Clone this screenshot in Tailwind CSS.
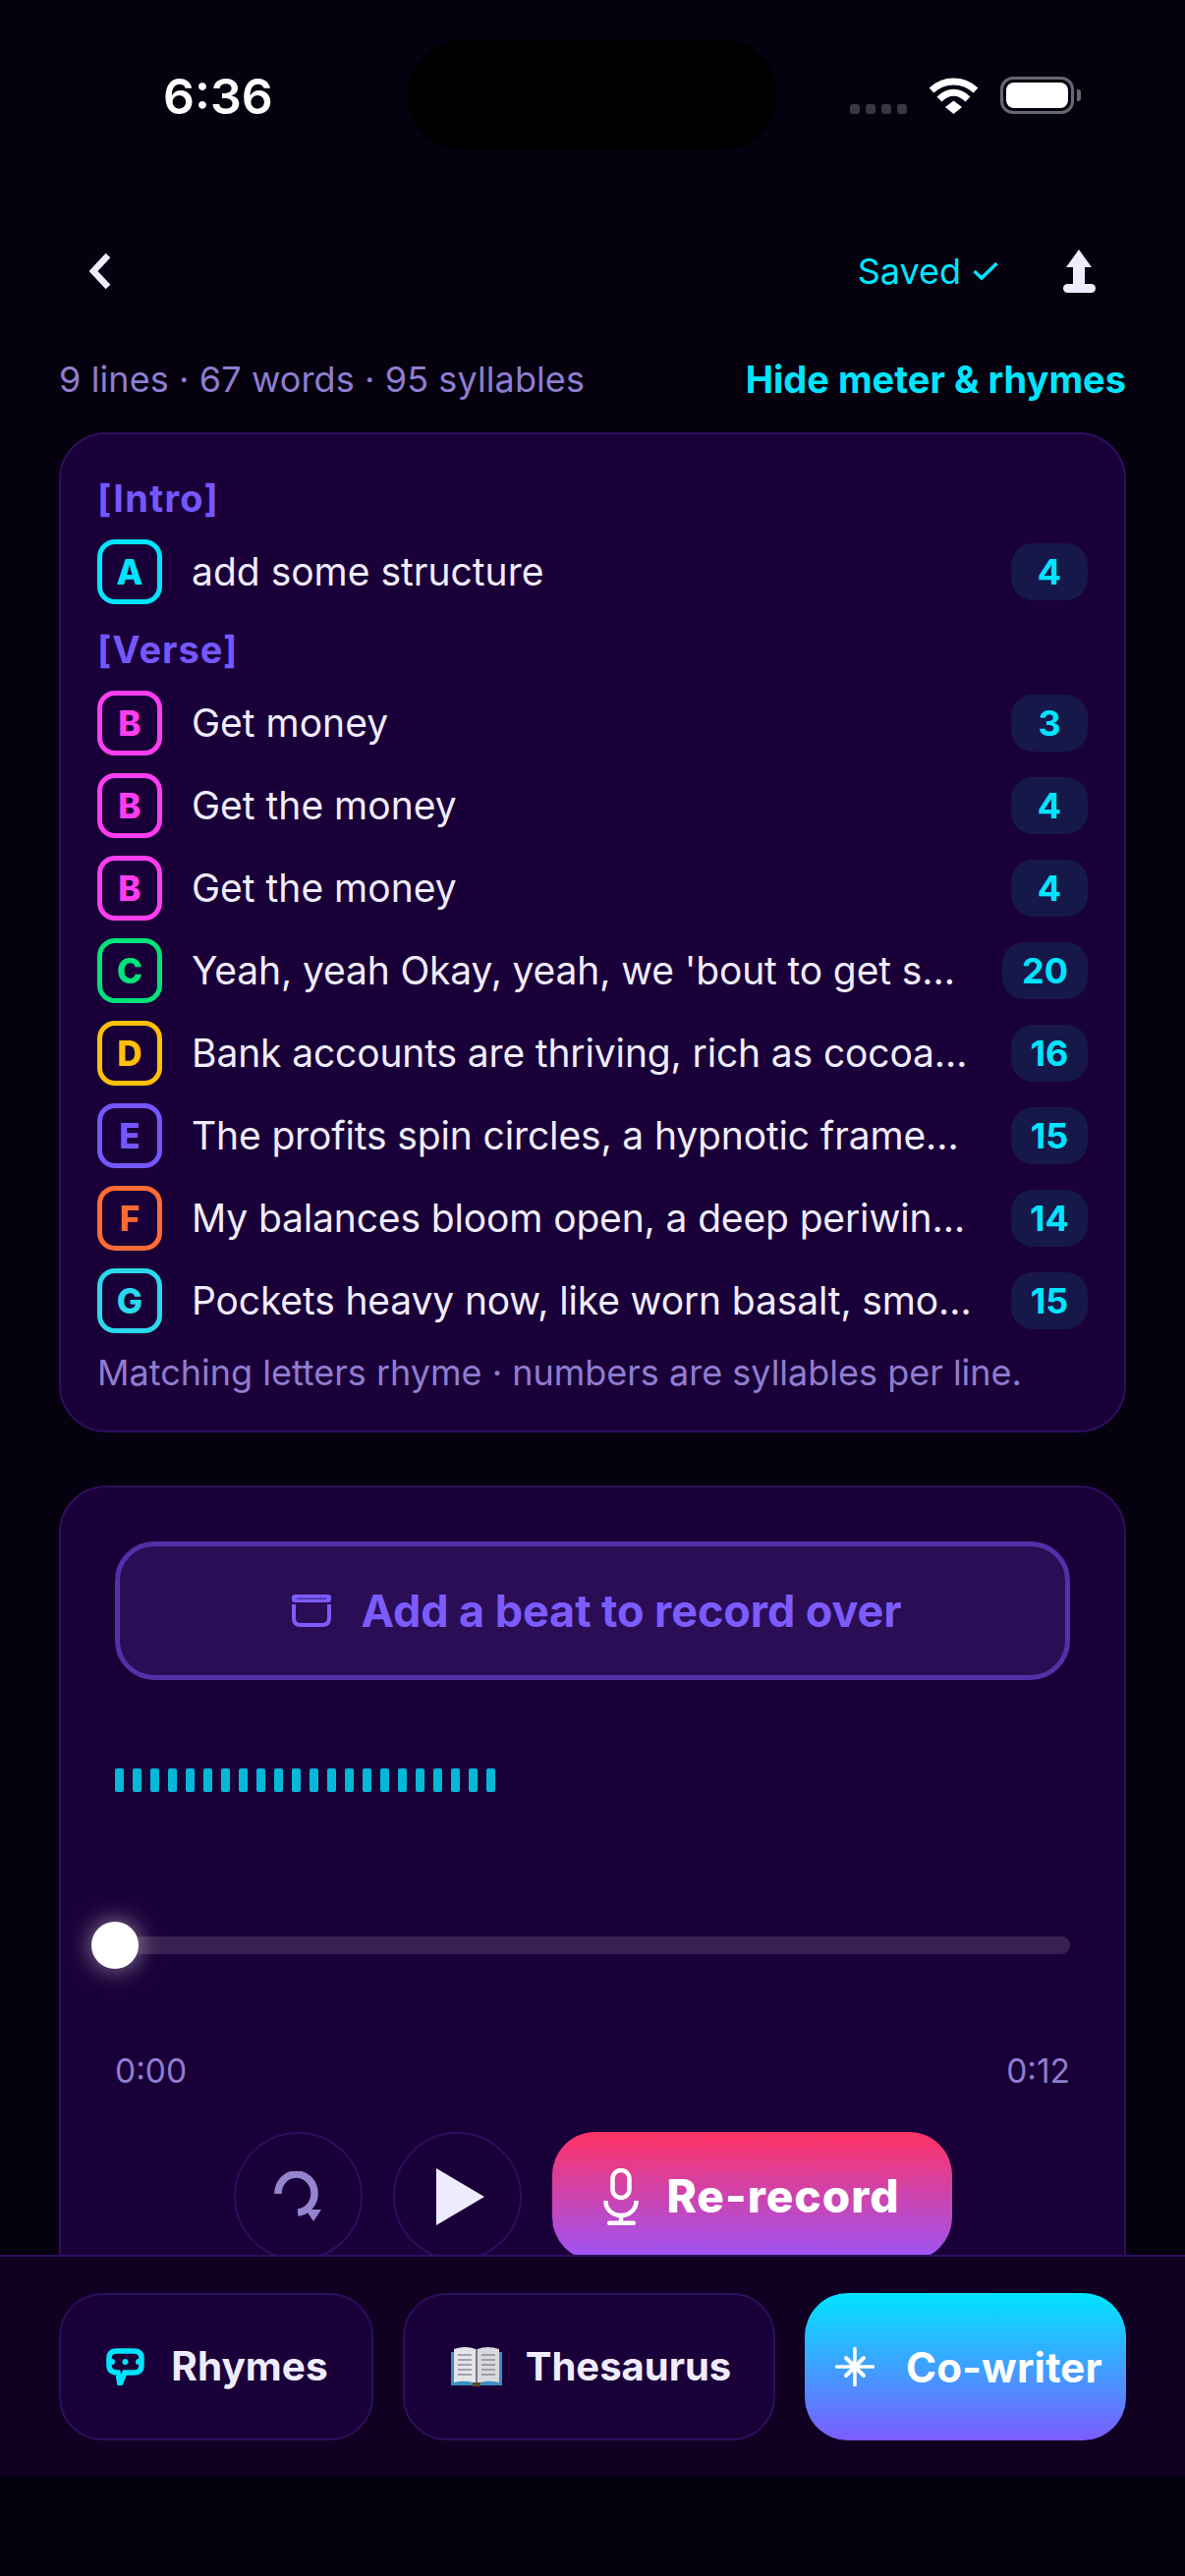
<!DOCTYPE html>
<html lang="en">
  <head>
    <meta charset="UTF-8" />
    <meta name="viewport" content="width=device-width, initial-scale=1.0" />
    <title>Lyrics editor</title>
    <script src="https://cdn.jsdelivr.net/npm/@tailwindcss/browser@4"></script>
  </head>
  <body class="bg-[#05010f] font-['Inter',sans-serif]">
    <div class="relative w-[1206px] h-[2622px] overflow-hidden bg-[#05010f] text-[#f0ecff]">
      <!-- status bar -->
      <div class="relative h-[220px]">
        <div class="absolute left-[415px] top-[41px] w-[376px] h-[112px] rounded-[56px] bg-black"></div>
        <div class="absolute left-[166px] top-[70px] text-[50px] leading-[56px] font-semibold text-white">6:36</div>
        <div class="absolute left-[865px] top-[106px] flex gap-[6px]">
          <span class="w-[10px] h-[10px] rounded-[3px] bg-[#3b3742]"></span>
          <span class="w-[10px] h-[10px] rounded-[3px] bg-[#3b3742]"></span>
          <span class="w-[10px] h-[10px] rounded-[3px] bg-[#3b3742]"></span>
          <span class="w-[10px] h-[10px] rounded-[3px] bg-[#3b3742]"></span>
        </div>
        <svg class="absolute left-[945px] top-[79px]" width="51" height="37" viewBox="0 0 51 37" fill="none">
          <path d="M3 13 C16 1 35 1 48 13" stroke="#fff" stroke-width="7" />
          <path d="M11 22 C20 13 31 13 40 22" stroke="#fff" stroke-width="7" />
          <path d="M17 30 L25.500 23.500 L34 30 L25.500 37 Z" fill="#fff" />
        </svg>
        <div class="absolute left-[1018px] top-[78px] w-[75px] h-[38px] rounded-[13px] border-[3px] border-[#6a6670] p-[3px]">
          <div class="w-full h-full rounded-[8px] bg-white"></div>
        </div>
        <div class="absolute left-[1096px] top-[91px] w-[4px] h-[12px] rounded-r-[3px] bg-[#6a6670]"></div>
      </div>

      <!-- header -->
      <div class="flex items-center justify-between h-[112px] pl-[90px] pr-[91px]">
        <svg width="24" height="38" viewBox="0 0 24 38" fill="none">
          <path d="M20 3 L5 19 L20 35" stroke="#f0ecff" stroke-width="6.500" />
        </svg>
        <div class="flex items-center">
          <span class="text-[36px] leading-[44px] text-[#00e5ff]">Saved</span>
          <svg class="ml-[12px] mr-[66px]" width="26" height="20" viewBox="0 0 26 20" fill="none">
            <path d="M1.500 10 L9 17 L24.500 2" stroke="#00e5ff" stroke-width="3.500" />
          </svg>
          <svg width="33" height="44" viewBox="0 0 33 44" fill="#f0ecff">
            <path d="M16 0 L29 18 L22 18 L22 35 L10 35 L10 18 L3 18 Z" />
            <rect x="0" y="35" width="33" height="9" rx="4.500" />
          </svg>
        </div>
      </div>

      <!-- stats -->
      <div class="flex items-center justify-between h-[60px] mt-[24px] px-[60px]">
        <span class="text-[36px] tracking-[0.1px] text-[#8f7dd0]">9 lines · 67 words · 95 syllables</span>
        <span class="text-[38px] font-bold text-[#00e5ff]">Hide meter &amp; rhymes</span>
      </div>

      <!-- rhyme card -->
      <section class="mx-[60px] mt-[24px] h-[1018px] rounded-[48px] border-2 border-[#2d0f5e] bg-[#1a0038] pt-[44px] px-[37px]">
        <h3 class="h-[42px] leading-[42px] text-[38px] font-bold tracking-[1.3px] text-[#7557ff]">[Intro]</h3>
        <div class="flex items-center mt-[21px] h-[66px]">
          <span class="flex items-center justify-center shrink-0 w-[66px] h-[66px] rounded-[18px] border-[5px] border-[#00e5ff] text-[35px] font-extrabold text-[#00e5ff]">A</span>
          <p class="flex-1 ml-[30px] text-[39px] text-[#f0ecff]">add some structure</p>
          <span class="flex items-center justify-center h-[58px] w-[78px] rounded-[22px] bg-[#16184a] text-[36px] font-bold text-[#00e5ff]">4</span>
        </div>
        <h3 class="h-[42px] leading-[42px] mt-[25px] text-[38px] font-bold tracking-[1px] text-[#7557ff]">[Verse]</h3>
        <div class="flex flex-col gap-[18px] mt-[21px]">
          <div class="flex items-center h-[66px]">
            <span class="flex items-center justify-center shrink-0 w-[66px] h-[66px] rounded-[18px] border-[5px] border-[#ff3df0] text-[35px] font-extrabold text-[#ff3df0]">B</span>
            <p class="flex-1 ml-[30px] text-[39px] text-[#f0ecff]">Get money</p>
            <span class="flex items-center justify-center h-[58px] w-[78px] rounded-[22px] bg-[#16184a] text-[36px] font-bold text-[#00e5ff]">3</span>
          </div>
          <div class="flex items-center h-[66px]">
            <span class="flex items-center justify-center shrink-0 w-[66px] h-[66px] rounded-[18px] border-[5px] border-[#ff3df0] text-[35px] font-extrabold text-[#ff3df0]">B</span>
            <p class="flex-1 ml-[30px] text-[39px] text-[#f0ecff]">Get the money</p>
            <span class="flex items-center justify-center h-[58px] w-[78px] rounded-[22px] bg-[#16184a] text-[36px] font-bold text-[#00e5ff]">4</span>
          </div>
          <div class="flex items-center h-[66px]">
            <span class="flex items-center justify-center shrink-0 w-[66px] h-[66px] rounded-[18px] border-[5px] border-[#ff3df0] text-[35px] font-extrabold text-[#ff3df0]">B</span>
            <p class="flex-1 ml-[30px] text-[39px] text-[#f0ecff]">Get the money</p>
            <span class="flex items-center justify-center h-[58px] w-[78px] rounded-[22px] bg-[#16184a] text-[36px] font-bold text-[#00e5ff]">4</span>
          </div>
          <div class="flex items-center h-[66px]">
            <span class="flex items-center justify-center shrink-0 w-[66px] h-[66px] rounded-[18px] border-[5px] border-[#00e27a] text-[35px] font-extrabold text-[#00e27a]">C</span>
            <p class="flex-1 ml-[30px] text-[39px] tracking-[-0.14px] whitespace-nowrap text-[#f0ecff]">Yeah, yeah Okay, yeah, we 'bout to get s…</p>
            <span class="flex items-center justify-center h-[58px] w-[87px] rounded-[22px] bg-[#16184a] text-[36px] font-bold text-[#00e5ff]">20</span>
          </div>
          <div class="flex items-center h-[66px]">
            <span class="flex items-center justify-center shrink-0 w-[66px] h-[66px] rounded-[18px] border-[5px] border-[#ffc107] text-[35px] font-extrabold text-[#ffc107]">D</span>
            <p class="flex-1 ml-[30px] text-[39px] tracking-[-0.14px] whitespace-nowrap text-[#f0ecff]">Bank accounts are thriving, rich as cocoa…</p>
            <span class="flex items-center justify-center h-[58px] w-[78px] rounded-[22px] bg-[#16184a] text-[36px] font-bold text-[#00e5ff]">16</span>
          </div>
          <div class="flex items-center h-[66px]">
            <span class="flex items-center justify-center shrink-0 w-[66px] h-[66px] rounded-[18px] border-[5px] border-[#7557ff] text-[35px] font-extrabold text-[#7557ff]">E</span>
            <p class="flex-1 ml-[30px] text-[39px] tracking-[-0.14px] whitespace-nowrap text-[#f0ecff]">The profits spin circles, a hypnotic frame…</p>
            <span class="flex items-center justify-center h-[58px] w-[78px] rounded-[22px] bg-[#16184a] text-[36px] font-bold text-[#00e5ff]">15</span>
          </div>
          <div class="flex items-center h-[66px]">
            <span class="flex items-center justify-center shrink-0 w-[66px] h-[66px] rounded-[18px] border-[5px] border-[#ff6b35] text-[35px] font-extrabold text-[#ff6b35]">F</span>
            <p class="flex-1 ml-[30px] text-[39px] tracking-[-0.14px] whitespace-nowrap text-[#f0ecff]">My balances bloom open, a deep periwin…</p>
            <span class="flex items-center justify-center h-[58px] w-[78px] rounded-[22px] bg-[#16184a] text-[36px] font-bold text-[#00e5ff]">14</span>
          </div>
          <div class="flex items-center h-[66px]">
            <span class="flex items-center justify-center shrink-0 w-[66px] h-[66px] rounded-[18px] border-[5px] border-[#2bd9ec] text-[35px] font-extrabold text-[#2bd9ec]">G</span>
            <p class="flex-1 ml-[30px] text-[39px] tracking-[-0.14px] whitespace-nowrap text-[#f0ecff]">Pockets heavy now, like worn basalt, smo…</p>
            <span class="flex items-center justify-center h-[58px] w-[78px] rounded-[22px] bg-[#16184a] text-[36px] font-bold text-[#00e5ff]">15</span>
          </div>
        </div>
        <p class="h-[42px] leading-[42px] mt-[19px] text-[36px] text-[#8f7dd0]">Matching letters rhyme · numbers are syllables per line.</p>
      </section>

      <!-- recorder card -->
      <section class="mx-[60px] mt-[54px] h-[900px] rounded-[48px] border-2 border-[#2d0f5e] bg-[#1a0038] pt-[55px] px-[55px]">
        <button class="flex items-center justify-center gap-[31px] w-full h-[141px] pl-[8px] rounded-[40px] border-[5px] border-[#5230a8] bg-[#2a0d55] text-[45px] font-bold tracking-[-0.1px] text-[#7c5cff]">
          <svg width="40" height="33" viewBox="0 0 40 33" fill="none">
            <rect x="0" y="0" width="40" height="8" rx="3" fill="#7c5cff" />
            <rect x="5" y="3.500" width="30" height="1.500" fill="#4a32a0" />
            <path d="M2 10 V24 Q2 31 9 31 H31 Q38 31 38 24 V10" stroke="#7c5cff" stroke-width="4" />
          </svg>
          Add a beat to record over
        </button>

        <div class="flex gap-[9px] mt-[90px]">
          <span class="w-[9px] h-[24px] rounded-[2px] bg-[#05b8d8]"></span>
          <span class="w-[9px] h-[24px] rounded-[2px] bg-[#05b8d8]"></span>
          <span class="w-[9px] h-[24px] rounded-[2px] bg-[#05b8d8]"></span>
          <span class="w-[9px] h-[24px] rounded-[2px] bg-[#05b8d8]"></span>
          <span class="w-[9px] h-[24px] rounded-[2px] bg-[#05b8d8]"></span>
          <span class="w-[9px] h-[24px] rounded-[2px] bg-[#05b8d8]"></span>
          <span class="w-[9px] h-[24px] rounded-[2px] bg-[#05b8d8]"></span>
          <span class="w-[9px] h-[24px] rounded-[2px] bg-[#05b8d8]"></span>
          <span class="w-[9px] h-[24px] rounded-[2px] bg-[#05b8d8]"></span>
          <span class="w-[9px] h-[24px] rounded-[2px] bg-[#05b8d8]"></span>
          <span class="w-[9px] h-[24px] rounded-[2px] bg-[#05b8d8]"></span>
          <span class="w-[9px] h-[24px] rounded-[2px] bg-[#05b8d8]"></span>
          <span class="w-[9px] h-[24px] rounded-[2px] bg-[#05b8d8]"></span>
          <span class="w-[9px] h-[24px] rounded-[2px] bg-[#05b8d8]"></span>
          <span class="w-[9px] h-[24px] rounded-[2px] bg-[#05b8d8]"></span>
          <span class="w-[9px] h-[24px] rounded-[2px] bg-[#05b8d8]"></span>
          <span class="w-[9px] h-[24px] rounded-[2px] bg-[#05b8d8]"></span>
          <span class="w-[9px] h-[24px] rounded-[2px] bg-[#05b8d8]"></span>
          <span class="w-[9px] h-[24px] rounded-[2px] bg-[#05b8d8]"></span>
          <span class="w-[9px] h-[24px] rounded-[2px] bg-[#05b8d8]"></span>
          <span class="w-[9px] h-[24px] rounded-[2px] bg-[#05b8d8]"></span>
          <span class="w-[9px] h-[24px] rounded-[2px] bg-[#05b8d8]"></span>
        </div>

        <div class="relative flex items-center h-[48px] mt-[132px]">
          <div class="w-full h-[18px] rounded-full bg-[#3a2052]"></div>
          <div class="absolute left-[-24px] top-0 w-[48px] h-[48px] rounded-full bg-white shadow-[0_0_24px_rgba(255,255,255,0.55)]"></div>
        </div>

        <div class="flex justify-between items-center h-[40px] mt-[84px] text-[33.5px] text-[#8f7dd0]">
          <span>0:00</span>
          <span>0:12</span>
        </div>

        <div class="flex justify-center gap-[31px] mt-[42px]">
          <button class="flex items-center justify-center w-[131px] h-[131px] rounded-full border-2 border-[#2d0f5e]">
            <svg width="48" height="51" viewBox="0 0 48 51" fill="none">
              <path d="M4 23 A18.500 19.500 0 1 1 24 42" stroke="#9585d0" stroke-width="7.500" />
              <path d="M32 39 L48 39 L40 51 Z" fill="#9585d0" />
            </svg>
          </button>
          <button class="flex items-center justify-center w-[131px] h-[131px] rounded-full border-2 border-[#2d0f5e]">
            <svg class="ml-[6px]" width="49" height="58" viewBox="0 0 49 58" fill="#f0ecff">
              <path d="M0 0 L49 29 L0 58 Z" />
            </svg>
          </button>
          <button class="flex items-center justify-center gap-[28px] w-[407px] h-[131px] rounded-[44px] bg-[linear-gradient(180deg,#ff3366,#9a55f7)] text-[46px] font-extrabold tracking-[1px] text-white">
            <svg width="36" height="58" viewBox="0 0 36 58" fill="none">
              <rect x="9.500" y="2" width="17" height="28" rx="8.500" stroke="#fff" stroke-width="4.500" />
              <path d="M2.500 33 V34 A15.500 14 0 0 0 33.500 34 V33" stroke="#fff" stroke-width="4.500" />
              <path d="M18 48 V56" stroke="#fff" stroke-width="4.500" />
              <rect x="4" y="53.500" width="29" height="4.500" rx="2" fill="#fff" />
            </svg>
            Re-record
          </button>
        </div>
      </section>

      <!-- bottom tools, sits over the recorder card -->
      <nav class="absolute left-0 top-[2295px] w-full h-[225px] border-t-2 border-[#2d0f5e] bg-[#100022] pt-[37px] pl-[60px] flex gap-[30px]">
        <button class="flex items-center justify-center gap-[27px] w-[320px] h-[150px] pl-[2px] rounded-[44px] border-2 border-[#2d0f5e] bg-[#1a0038] text-[40.5px] font-bold text-[#f0ecff]">
          <svg width="39" height="38" viewBox="0 0 39 38" fill="none">
            <path d="M11 3 H28 Q36 3 36 10 V18 Q36 25 28 25 H19 L14 37 L12 25 Q3 25 3 18 V10 Q3 3 11 3 Z" stroke="#00e5ff" stroke-width="5.500" />
            <circle cx="19.500" cy="14" r="3" fill="#00e5ff" />
            <circle cx="6" cy="14" r="3" fill="#00e5ff" />
            <circle cx="33" cy="14" r="3" fill="#00e5ff" />
          </svg>
          Rhymes
        </button>
        <button class="flex items-center justify-center gap-[24px] w-[379px] h-[150px] pl-[4px] rounded-[44px] border-2 border-[#2d0f5e] bg-[#1a0038] text-[40px] font-bold text-[#f0ecff]">
          <svg width="52" height="42" viewBox="0 0 52 42">
            <path d="M0 6 H52 V40 H30 Q26 42 22 40 H0 Z" fill="#3a8fc0" />
            <path d="M3 3 Q15 -1 25 3 V38 Q15 34 3 37 Z" fill="#e4e4ea" />
            <path d="M27 3 Q37 -1 49 3 V37 Q37 34 27 38 Z" fill="#d8d8de" />
            <path d="M25 3 H27 V38 H25 Z" fill="#77777f" />
            <path d="M7 9 H21 M7 14 H21 M7 19 H21 M7 24 H21 M7 29 H21 M31 9 H45 M31 14 H45 M31 19 H45 M31 24 H45 M31 29 H45" stroke="#8c8c96" stroke-width="1.500" />
            <rect x="22" y="37" width="8" height="4" fill="#5a4a20" />
          </svg>
          Thesaurus
        </button>
        <button class="flex items-center gap-[32px] w-[327px] h-[150px] pl-[31px] rounded-[44px] bg-[linear-gradient(180deg,#00e5ff,#7c5cff)] text-[42px] font-bold tracking-[0.2px] text-white">
          <svg width="40" height="40" viewBox="0 0 40 40" fill="none">
            <path d="M20 1.500 V38.500 M1.500 20 H38.500" stroke="#fff" stroke-width="3.500" stroke-linecap="round" />
            <path d="M11 11 L29 29 M29 11 L11 29" stroke="#fff" stroke-width="4" stroke-linecap="round" />
          </svg>
          Co-writer
        </button>
      </nav>
    </div>
  </body>
</html>
